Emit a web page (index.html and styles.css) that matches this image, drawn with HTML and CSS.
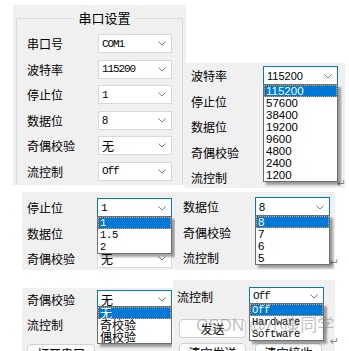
FILE: index.html
```html
<!DOCTYPE html>
<html lang="zh">
<head>
<meta charset="utf-8">
<title>串口设置</title>
<link rel="stylesheet" href="styles.css">
</head>
<body>
<div class="canvas">

  <section class="win p1">
    <fieldset class="group">
      <legend>串口设置</legend>
      <div class="form">
        <span class="lbl">串口号</span><div class="combo mono"><span>COM1</span><svg class="chev" viewBox="0 0 8 5"><polyline points="0.5,0.5 4,4 7.5,0.5"/></svg></div>
        <span class="lbl">波特率</span><div class="combo mono"><span>115200</span><svg class="chev" viewBox="0 0 8 5"><polyline points="0.5,0.5 4,4 7.5,0.5"/></svg></div>
        <span class="lbl">停止位</span><div class="combo mono"><span>1</span><svg class="chev" viewBox="0 0 8 5"><polyline points="0.5,0.5 4,4 7.5,0.5"/></svg></div>
        <span class="lbl">数据位</span><div class="combo sans"><span>8</span><svg class="chev" viewBox="0 0 8 5"><polyline points="0.5,0.5 4,4 7.5,0.5"/></svg></div>
        <span class="lbl">奇偶校验</span><div class="combo cjk"><span>无</span><svg class="chev" viewBox="0 0 8 5"><polyline points="0.5,0.5 4,4 7.5,0.5"/></svg></div>
        <span class="lbl">流控制</span><div class="combo mono"><span>Off</span><svg class="chev" viewBox="0 0 8 5"><polyline points="0.5,0.5 4,4 7.5,0.5"/></svg></div>
      </div>
    </fieldset>
  </section>

  <section class="win p2">
    <div class="form">
      <span class="lbl">波特率</span>
      <div class="combo sans focus"><span>115200</span><svg class="chev" viewBox="0 0 8 5"><polyline points="0.5,0.5 4,4 7.5,0.5"/></svg>
        <ul class="drop sans">
          <li class="sel">115200</li><li>57600</li><li>38400</li><li>19200</li><li>9600</li><li>4800</li><li>2400</li><li>1200</li>
        </ul>
      </div>
      <span class="lbl">停止位</span><span></span>
      <span class="lbl">数据位</span><span></span>
      <span class="lbl">奇偶校验</span><span></span>
      <span class="lbl">流控制</span><span></span>
    </div>
  </section>

  <section class="win p3">
    <div class="form">
      <span class="lbl">停止位</span>
      <div class="combo mono focus"><span>1</span><svg class="chev" viewBox="0 0 8 5"><polyline points="0.5,0.5 4,4 7.5,0.5"/></svg>
        <ul class="drop mono">
          <li class="sel">1</li><li>1.5</li><li>2</li>
        </ul>
      </div>
      <span class="lbl">数据位</span><span></span>
      <span class="lbl">奇偶校验</span><div class="combo cjk"><span>无</span><svg class="chev" viewBox="0 0 8 5"><polyline points="0.5,0.5 4,4 7.5,0.5"/></svg></div>
    </div>
  </section>

  <section class="win p4">
    <div class="form">
      <span class="lbl">数据位</span>
      <div class="combo sans focus"><span>8</span><svg class="chev" viewBox="0 0 8 5"><polyline points="0.5,0.5 4,4 7.5,0.5"/></svg>
        <ul class="drop sans">
          <li class="sel">8</li><li>7</li><li>6</li><li>5</li>
        </ul>
      </div>
      <span class="lbl">奇偶校验</span><span></span>
      <span class="lbl">流控制</span><span></span>
    </div>
  </section>

  <section class="win p5">
    <div class="form">
      <span class="lbl">奇偶校验</span>
      <div class="combo cjk focus"><span>无</span><svg class="chev" viewBox="0 0 8 5"><polyline points="0.5,0.5 4,4 7.5,0.5"/></svg>
        <ul class="drop cjk">
          <li class="sel">无</li><li>奇校验</li><li>偶校验</li>
        </ul>
      </div>
      <span class="lbl">流控制</span><span></span>
    </div>
    <div class="btnrow"><button class="btn">打开串口</button></div>
  </section>

  <section class="win p6">
    <div class="form">
      <span class="lbl">流控制</span>
      <div class="combo mono focus"><span>Off</span><svg class="chev" viewBox="0 0 8 5"><polyline points="0.5,0.5 4,4 7.5,0.5"/></svg>
        <ul class="drop mono">
          <li class="sel">Off</li><li>Hardware</li><li>Software</li>
        </ul>
      </div>
    </div>
    <div class="btns">
      <button class="btn">发送</button><span></span>
      <button class="btn">清空发送</button><button class="btn">清空接收</button>
    </div>
  </section>

  <span class="ret r1">↵</span>
  <span class="ret r2">↵</span>
  <span class="ret r3">↵</span>
  <span class="mark">CSDN @小康同学</span>
</div>
</body>
</html>
```
FILE: styles.css
```css
* { box-sizing: border-box; }
html, body { margin: 0; padding: 0; background: #fff; }
body { width: 349px; height: 351px; overflow: hidden; }

.canvas {
  position: relative;
  width: 349px;
  height: 351px;
  background: #fff;
  font-family: "Noto Sans CJK SC", "Liberation Sans", sans-serif;
  font-size: 12px;
  color: #000;
}

.win {
  position: absolute;
  background: #f0f0f0;
  overflow: hidden;
}

.p1 { left: 13px; top: 5px; width: 173px; height: 180px; }
.p2 { left: 185px; top: 63px; width: 160px; height: 125px; padding: 3px 0 0 6px; }
.p3 { left: 22px; top: 192px; width: 153px; height: 78px; padding: 6px 0 0 5px; }
.p4 { left: 175px; top: 192px; width: 160px; height: 78px; padding: 5px 0 0 8px; }
.p5 { left: 22px; top: 288px; width: 150px; height: 63px; padding: 2px 0 0 5px; }
.p6 { left: 173px; top: 280px; width: 162px; height: 71px; padding: 7px 0 0 4px; }

.group {
  margin: 5px 0 0 3px;
  width: 167px;
  height: 200px;
  border: 1px solid #dcdcdc;
  padding: 8px 0 0 10px;
}
.group legend {
  margin: 0 auto;
  padding: 0 4px;
  font-size: 13px;
  line-height: 16px;
}

.form {
  display: grid;
  grid-template-columns: 70px 75px;
  grid-auto-rows: 25.6px;
  align-items: start;
}
.p1 .form { grid-template-columns: 71px 74px; }
.p2 .form, .p4 .form { grid-template-columns: 72px 75px; }
.p5 .form { grid-template-columns: 70px 75px; grid-auto-rows: 25px; }
.p6 .form { grid-template-columns: 72px 75px; }

.lbl { line-height: 20px; white-space: nowrap; }
.p1 .lbl { line-height: 19px; }

.combo {
  position: relative;
  height: 19px;
  background: #fff;
  border: 1px solid #d9d9d9;
  display: flex;
  align-items: center;
  justify-content: space-between;
  padding: 0 5px 0 3px;
}
.combo.focus { border-color: #0078d7; height: 20px; }
.p5 .combo, .p6 .combo { height: 18px; }

.chev {
  width: 8px;
  height: 5px;
  fill: none;
  stroke: #7a7a7a;
  stroke-width: 1;
}

.mono { font-family: "Liberation Mono", monospace; font-size: 11px; letter-spacing: -1.1px; }
.sans { font-family: "Liberation Sans", sans-serif; font-size: 11px; }
.cjk { font-family: "Noto Sans CJK SC", sans-serif; font-size: 12px; }

.drop {
  position: absolute;
  left: -1px;
  right: -1px;
  top: 100%;
  margin: -1px 0 0;
  padding: 0;
  list-style: none;
  background: #fff;
  border: 1px solid #6d6d6d;
  box-shadow: 3px 3px 2px rgba(0, 0, 0, 0.35);
  z-index: 2;
}
.drop li {
  height: 12px;
  line-height: 12px;
  padding-left: 2px;
  white-space: nowrap;
}
.drop.sans li { font-size: 11.5px; }
.drop.mono li { letter-spacing: -0.3px; font-size: 10.5px; }
.drop li.sel {
  background: #0078d7;
  color: #fff;
  outline: 1px dotted #f0a040;
  outline-offset: -1px;
}

.btnrow { padding-top: 4px; }
.btn {
  font-family: "Noto Sans CJK SC", sans-serif;
  font-size: 12px;
  line-height: 17px;
  padding: 0;
  height: 19px;
  width: 68px;
  background: #fdfdfd;
  border: 1px solid #d0d0d0;
  border-radius: 4px;
  color: #000;
}
.btns {
  display: grid;
  grid-template-columns: 67px 67px;
  column-gap: 9px;
  row-gap: 5px;
  padding: 6px 0 0 2px;
}
.btns .btn { width: 67px; }

.ret {
  position: absolute;
  font-family: "DejaVu Sans", sans-serif;
  font-size: 11px;
  color: #8a8a8a;
  line-height: 11px;
}
.r1 { left: 337px; top: 178px; }
.r2 { left: 330px; top: 257px; }
.r3 { left: 330px; top: 336px; }

.mark {
  position: absolute;
  left: 196px;
  top: 316px;
  font-family: "Liberation Sans", "Noto Sans CJK SC", sans-serif;
  font-size: 17px;
  line-height: 20px;
  color: rgba(140, 140, 140, 0.55);
  white-space: nowrap;
  z-index: 3;
}
```
